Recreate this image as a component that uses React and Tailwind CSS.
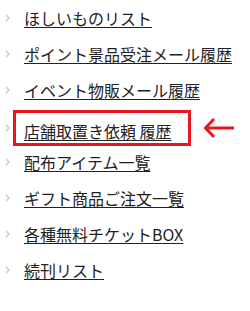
import React from "react";

const items = [
  "ほしいものリスト",
  "ポイント景品受注メール履歴",
  "イベント物販メール履歴",
  "店舗取置き依頼 履歴",
  "配布アイテム一覧",
  "ギフト商品ご注文一覧",
  "各種無料チケットBOX",
  "続刊リスト",
];

function Chevron() {
  return (
    <svg width="5" height="8" viewBox="0 0 5 8" className="shrink-0">
      <polyline points="1,1 4,4 1,7" fill="none" stroke="#c4c4c4" strokeWidth="1.2" />
    </svg>
  );
}

function Arrow() {
  return (
    <svg width="32" height="24" viewBox="0 0 32 24" className="shrink-0">
      <line x1="3" y1="12" x2="31" y2="12" stroke="#e8171f" strokeWidth="3" />
      <polyline points="11,3 2.5,12 11,21" fill="none" stroke="#e8171f" strokeWidth="3" />
    </svg>
  );
}

export default function App() {
  return (
    <div
      className="w-[250px] h-[311px] bg-white text-[#222] text-[16px]"
      style={{ fontFamily: '"Noto Sans CJK JP", "Noto Sans", sans-serif' }}
    >
      <ul>
        {items.map((label, i) =>
          i === 3 ? (
            <li key={i} className="h-9 flex items-start">
              <div className="w-[13px] pl-[5px] self-center pt-1">
                <Chevron />
              </div>
              <div className="mt-[2px] w-[178px] h-9 border-[3px] border-[#e8171f] pl-2 flex items-center pt-[5px]">
                <a href="#" className="underline underline-offset-2 leading-none whitespace-nowrap">
                  {label}
                </a>
              </div>
              <div className="ml-3 self-center pt-1">
                <Arrow />
              </div>
            </li>
          ) : (
            <li key={i} className="h-9 flex items-center">
              <div className="w-[13px] pl-[5px]">
                <Chevron />
              </div>
              <a href="#" className="ml-[11px] underline underline-offset-2 whitespace-nowrap">
                {label}
              </a>
            </li>
          )
        )}
      </ul>
    </div>
  );
}
